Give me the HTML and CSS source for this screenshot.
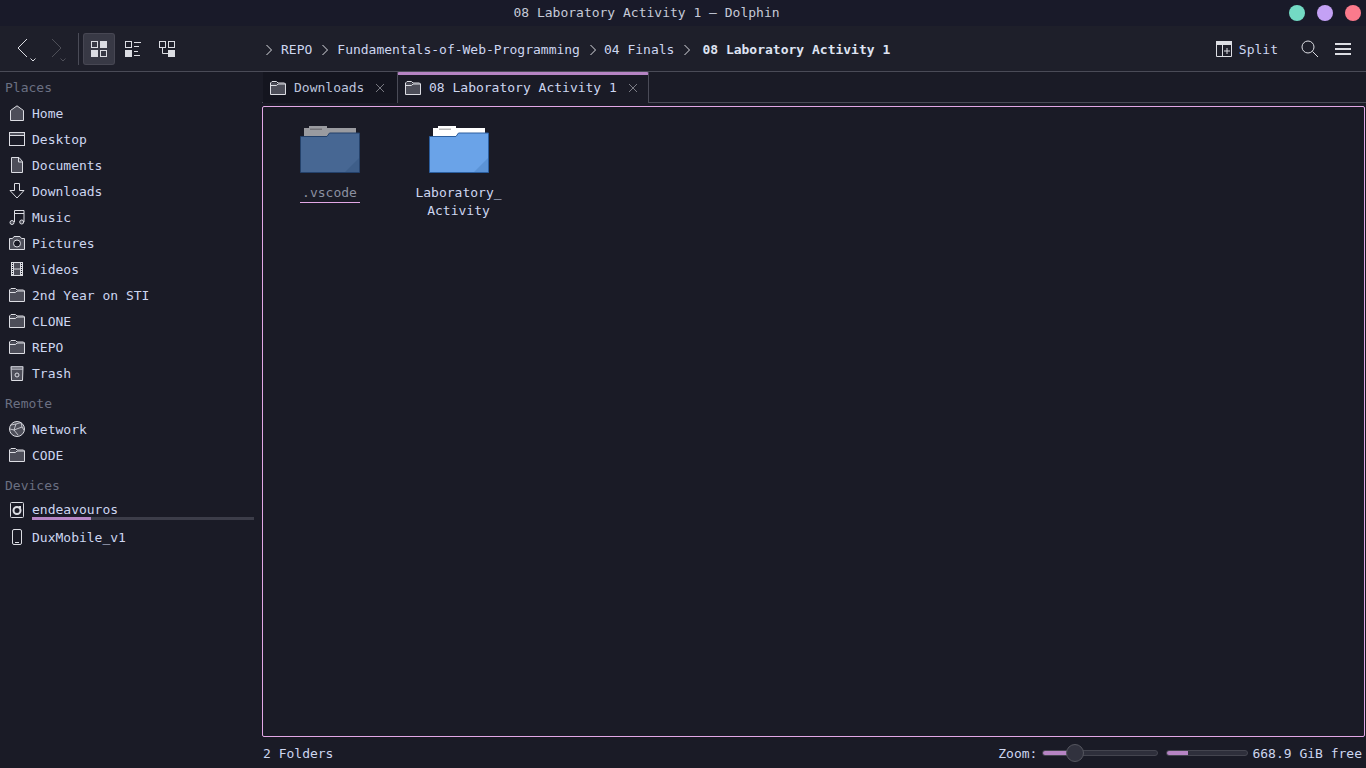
FILE: index.html
```html
<!DOCTYPE html>
<html lang="en">
<head>
  <meta charset="UTF-8" />
  <title>08 Laboratory Activity 1 — Dolphin</title>
  <link rel="stylesheet" href="styles.css">
</head>
<body>

<svg class="defs" width="0" height="0">
  <symbol id="i-folder" viewBox="0 0 16 16">
    <path d="M1 14V3.500L2 2.500H6.500L8 4H15V14Z" fill="#4d4e59" />
    <path d="M.5 14.500V3L2 1.500H6.500L8 3H14.500L15.500 4V14.500ZM.5 6.500L1 5.500H6.500L8 4H15.500" fill="none" stroke="#dcdde3" />
  </symbol>
  <symbol id="i-big" viewBox="0 0 60 47">
    <path d="M4 2H9V0H27V2H56V12H4Z" class="big-back" />
    <rect x="10" y="2.500" width="12" height="1.500" class="big-tab" />
    <path d="M.5 46.500V10.500H27L29.500 7H59.500V46.500Z" class="big-front" />
    <path d="M45 46L59 46V32Z" class="big-fold" />
  </symbol>
</svg>

<div class="window">
  <div class="titlebar">
    <div class="title">08 Laboratory Activity 1 — Dolphin</div>
    <div class="win-buttons">
      <span class="dot dot-green"></span>
      <span class="dot dot-purple"></span>
      <span class="dot dot-red"></span>
    </div>
  </div>

  <div class="toolbar">
    <div class="nav-btn">
      <svg width="16" height="24" viewBox="0 0 16 24"><path d="M12 2L3 11L12 20" class="line" /></svg>
      <svg class="caret" width="6" height="4" viewBox="0 0 6 4"><path d="M.5 .5L3 3L5.500 .5" class="line" /></svg>
    </div>
    <div class="nav-btn nav-off">
      <svg width="16" height="24" viewBox="0 0 16 24"><path d="M3 2L12 11L3 20" class="line" /></svg>
      <svg class="caret" width="6" height="4" viewBox="0 0 6 4"><path d="M.5 .5L3 3L5.500 .5" class="line" /></svg>
    </div>
    <div class="tool-sep"></div>
    <div class="view-btn view-active">
      <svg width="16" height="16" viewBox="0 0 16 16"><rect x=".5" y=".5" width="6" height="6" class="line" /><rect x="9" y="0" width="7" height="7" class="solid" /><rect x="0" y="9" width="7" height="7" class="solid" /><rect x="9.500" y="9.500" width="6" height="6" class="line" /></svg>
    </div>
    <div class="view-btn">
      <svg width="16" height="16" viewBox="0 0 16 16"><rect x=".5" y=".5" width="6" height="6" class="line" /><rect x="0" y="9" width="7" height="7" class="solid" /><path d="M9 1.500H16M9 5.500H14M9 10.500H13M9 14.500H15" class="line" /></svg>
    </div>
    <div class="view-btn">
      <svg width="16" height="16" viewBox="0 0 16 16"><rect x=".5" y=".5" width="6" height="6" class="line" /><rect x="9.500" y=".5" width="6" height="6" class="line" /><rect x="9" y="9" width="7" height="7" class="solid" /><path d="M3.500 7V12.500H9" class="line" /></svg>
    </div>

    <div class="crumbs">
      <svg class="crumb-arrow crumb-first" width="8" height="12" viewBox="0 0 8 12"><path d="M1.500 1L6.500 6L1.500 11" class="line" /></svg>
      <span>REPO</span>
      <svg class="crumb-arrow crumb-second" width="8" height="12" viewBox="0 0 8 12"><path d="M1.500 1L6.500 6L1.500 11" class="line" /></svg>
      <span>Fundamentals-of-Web-Programming</span>
      <svg class="crumb-arrow" width="8" height="12" viewBox="0 0 8 12"><path d="M1.500 1L6.500 6L1.500 11" class="line" /></svg>
      <span>04 Finals</span>
      <svg class="crumb-arrow crumb-last" width="8" height="12" viewBox="0 0 8 12"><path d="M1.500 1L6.500 6L1.500 11" class="line" /></svg>
      <strong>08 Laboratory Activity 1</strong>
    </div>

    <div class="tool-right">
      <div class="split">
        <svg width="16" height="16" viewBox="0 0 16 16"><path d="M.5 .5H15.500V15.500H.5ZM6.500 4V15.500" class="line" /><rect x="0" y="0" width="16" height="4" class="solid" /><path d="M11 7V13M8 10H14" class="line" /></svg>
        <span>Split</span>
      </div>
      <svg class="search" width="18" height="18" viewBox="0 0 18 18"><circle cx="7" cy="7" r="6" class="line" /><path d="M11.500 11.500L17 17" class="line" /></svg>
      <svg class="menu" width="16" height="14" viewBox="0 0 16 14"><rect y="1" width="16" height="2" class="solid" /><rect y="6" width="16" height="2" class="solid" /><rect y="11" width="16" height="2" class="solid" /></svg>
    </div>
  </div>

  <div class="body">
    <aside class="sidebar">
      <div class="side-head">Places</div>
      <div class="side-item">
        <svg width="16" height="16" viewBox="0 0 16 16"><path d="M8 .8L14.500 5.500V15.500H1.500V5.500Z" fill="#4d4e59" stroke="#dcdde3" /></svg>
        Home
      </div>
      <div class="side-item">
        <svg width="16" height="16" viewBox="0 0 16 16"><rect x=".5" y="1.500" width="15" height="13" class="line" /><path d="M1 4.500H15" class="line" /><rect x="1" y="2" width="14" height="2" fill="#4d4e59" /></svg>
        Desktop
      </div>
      <div class="side-item">
        <svg width="16" height="16" viewBox="0 0 16 16"><path d="M2.500 .5H10L13.500 4.500V15.500H2.500Z" fill="#4d4e59" stroke="#dcdde3" /><path d="M9.500 .5V5H13.500" class="line" /></svg>
        Documents
      </div>
      <div class="side-item">
        <svg width="16" height="16" viewBox="0 0 16 16"><path d="M5.500 .5H10.500V7.500H15L8 15L1 7.500H5.500Z" class="line" /></svg>
        Downloads
      </div>
      <div class="side-item">
        <svg width="16" height="16" viewBox="0 0 16 16"><path d="M5.500 13V1.500H15V13M5.500 4.500H15" class="line" /><circle cx="3" cy="13.500" r="2" fill="#4d4e59" stroke="#dcdde3" /><circle cx="12.700" cy="13" r="2" fill="#4d4e59" stroke="#dcdde3" /></svg>
        Music
      </div>
      <div class="side-item">
        <svg width="16" height="16" viewBox="0 0 16 16"><path d="M.5 3.500H3.500L5 1.500H11L12.500 3.500H15.500V14.500H.5Z" fill="#4d4e59" stroke="#dcdde3" /><circle cx="8" cy="8.500" r="3.500" fill="#1a1b26" stroke="#dcdde3" /></svg>
        Pictures
      </div>
      <div class="side-item">
        <svg width="16" height="16" viewBox="0 0 16 16"><rect x="2" y="1" width="12" height="14" fill="#dcdde3" /><rect x="5" y="2" width="6" height="5.500" fill="#4d4e59" /><rect x="5" y="8.500" width="6" height="5.500" fill="#4d4e59" /><path d="M3.500 2V14M12.500 2V14" stroke="#1a1b26" stroke-width="1" stroke-dasharray="1 1" fill="none" /></svg>
        Videos
      </div>
      <div class="side-item"><svg width="16" height="16"><use href="#i-folder" /></svg>2nd Year on STI</div>
      <div class="side-item"><svg width="16" height="16"><use href="#i-folder" /></svg>CLONE</div>
      <div class="side-item"><svg width="16" height="16"><use href="#i-folder" /></svg>REPO</div>
      <div class="side-item">
        <svg width="16" height="16" viewBox="0 0 16 16"><path d="M2 1.500H14L13.500 15.500H2.500Z" fill="#4d4e59" stroke="#dcdde3" /><rect x="2" y="1" width="12" height="4" fill="#b8b9c2" /><path d="M4 2V4.500M6 2V4.500M8 2V4.500M10 2V4.500M12 2V4.500" stroke="#4d4e59" fill="none" /><circle cx="8" cy="10" r="2" class="line" /></svg>
        Trash
      </div>

      <div class="side-head side-gap">Remote</div>
      <div class="side-item">
        <svg width="16" height="16" viewBox="0 0 16 16"><circle cx="8" cy="8" r="7.500" fill="#4d4e59" stroke="#dcdde3" /><path d="M2 4L7 3L12 1.500M7 3L5 9L1 8M5 9L9 14M5 9L13 6L15 9M13 6L12 1.500" fill="none" stroke="#dcdde3" stroke-width=".8" /></svg>
        Network
      </div>
      <div class="side-item"><svg width="16" height="16"><use href="#i-folder" /></svg>CODE</div>

      <div class="side-head side-gap">Devices</div>
      <div class="side-item side-device">
        <svg width="16" height="16" viewBox="0 0 16 16"><rect x="1.500" y=".5" width="13" height="15" rx="1" class="line" /><circle cx="8" cy="8.500" r="3.500" fill="none" stroke="#dcdde3" stroke-width="2" /><rect x="10" y="4" width="2" height="2" class="solid" /></svg>
        <div class="device-name">
          endeavouros
          <div class="device-bar"><div class="device-fill"></div></div>
        </div>
      </div>
      <div class="side-item">
        <svg width="16" height="16" viewBox="0 0 16 16"><rect x="3.500" y=".5" width="9" height="15" rx="1.500" class="line" /><path d="M6 13.500H10" class="line" /></svg>
        DuxMobile_v1
      </div>
    </aside>

    <main class="main">
      <div class="tabs">
        <div class="tab">
          <svg width="16" height="16"><use href="#i-folder" /></svg>
          <span>Downloads</span>
          <svg class="tab-x" width="10" height="10" viewBox="0 0 10 10"><path d="M1 1L9 9M9 1L1 9" class="line" /></svg>
        </div>
        <div class="tab tab-active">
          <svg width="16" height="16"><use href="#i-folder" /></svg>
          <span>08 Laboratory Activity 1</span>
          <svg class="tab-x" width="10" height="10" viewBox="0 0 10 10"><path d="M1 1L9 9M9 1L1 9" class="line" /></svg>
        </div>
      </div>

      <div class="view">
        <div class="file file-hidden">
          <svg width="60" height="47"><use href="#i-big" /></svg>
          <div class="file-name">.vscode</div>
        </div>
        <div class="file">
          <svg width="60" height="47"><use href="#i-big" /></svg>
          <div class="file-name">Laboratory_<br>Activity</div>
        </div>
      </div>

      <div class="status">
        <span class="status-count">2 Folders</span>
        <span>Zoom:</span>
        <div class="slider">
          <div class="slider-fill"></div>
          <div class="slider-knob"></div>
        </div>
        <div class="capacity"><div class="capacity-fill"></div></div>
        <span>668.9 GiB free</span>
      </div>
    </main>
  </div>
</div>

</body>
</html>
```

FILE: styles.css
```css
* { box-sizing: border-box; }

html, body { margin: 0; height: 100%; overflow: hidden; }

body {
  font-family: "DejaVu Sans Mono", "Liberation Mono", monospace;
  font-size: 13px;
  color: #cdd6f0;
  background: #1a1b26;
}

.defs { position: absolute; }

.window { display: flex; flex-direction: column; width: 1366px; height: 768px; }

svg { display: block; flex: none; }
.line { fill: none; stroke: #dcdde3; stroke-width: 1; }
.solid { fill: #dcdde3; }

/* title bar */
.titlebar { display: flex; align-items: center; height: 26px; background: #191a29; }
.title { flex: 1; padding: 0 0 2px 4px; text-align: center; color: #c6cad8; }
.win-buttons { display: flex; gap: 12px; width: 77px; }
.dot { width: 16px; height: 16px; border-radius: 50%; }
.dot-green { background: #73dac4; }
.dot-purple { background: #c4a1f5; }
.dot-red { background: #fb7a8c; }

/* tool bar */
.toolbar {
  display: flex; align-items: center;
  height: 46px; padding-left: 15px;
  background: #1e1f2a;
  border-bottom: 1px solid #4a4b57;
}
.nav-btn { position: relative; width: 34px; height: 24px; }
.nav-off { opacity: .25; width: 29px; }
.caret { position: absolute; left: 15px; top: 21px; }
.nav-off .caret { left: 11px; }
.tool-sep { width: 1px; height: 32px; margin-right: 4px; background: #4a4b57; }
.view-btn {
  display: flex; align-items: center; justify-content: center;
  width: 32px; height: 32px; margin-right: 2px;
  border: 1px solid transparent; border-radius: 3px;
}
.view-active { background: #383945; border-color: #55566280; }

.crumbs {
  display: flex; align-items: center;
  margin-left: 80px; padding-top: 2px;
  color: #cdd6f0;
}
.crumb-arrow { margin-right: 7px; }
.crumb-first { margin-right: 8px; }
.crumb-second { margin-right: 8px; }
.crumb-last { margin-right: 11px; }
.crumbs span, .crumbs strong { margin-right: 9px; }
.crumbs strong { color: #dfe3f2; }

.tool-right { display: flex; align-items: center; margin-left: auto; padding-right: 15px; }
.split { display: flex; align-items: center; gap: 7px; margin-right: 23px; }
.split span { padding-top: 2px; }
.search { margin-right: 16px; }

/* side panel */
.body { display: flex; flex: 1; min-height: 0; }
.sidebar { width: 262px; flex: none; padding-top: 2px; }
.side-head { height: 26px; padding: 1px 0 0 5px; line-height: 26px; color: #6b7082; }
.side-gap { margin-top: 4px; }
.side-item { display: flex; align-items: center; gap: 7px; height: 26px; padding-left: 9px; }
.side-device { align-items: flex-start; padding-top: 4px; }
.device-name { flex: 1; line-height: 15px; padding-right: 8px; }
.device-bar { height: 3px; background: #3c3d49; }
.device-fill { width: 59px; height: 3px; background: #b685c4; }

/* tabs and view */
.main { display: flex; flex-direction: column; flex: 1; min-width: 0; }
.tabs { display: flex; height: 31px; padding-left: 1px; border-bottom: 1px solid #4a4b57; }
.tab {
  display: flex; align-items: center;
  height: 31px; padding-left: 7px;
  background: #14151f;
  color: #bcc4dc;
}
.tab span { margin-left: 8px; }
.tab-x { margin-left: 11px; opacity: .5; }
.tab:first-child { width: 134px; }
.tab-active {
  width: 252px;
  padding-bottom: 3px;
  background: #1a1b26;
  border: 1px solid #4a4b57;
  border-top: 3px solid #b685c4;
  border-bottom: none;
  border-radius: 2px 2px 0 0;
  color: #cdd6f0;
}

.view {
  flex: 1;
  display: flex; align-items: flex-start;
  margin: 3px 1px 0 0;
  padding: 19px 0 0 2px;
  border: 1px solid #e3a8e6;
  border-radius: 2px;
}
.file { display: flex; flex-direction: column; align-items: center; width: 129px; }
.file-name { margin-top: 11px; line-height: 18px; text-align: center; color: #cdd6f0; }
.big-back { fill: #fff; }
.big-tab { fill: #b9b9b9; }
.big-front { fill: #6aa3e8; stroke: #2c5f9f; }
.big-fold { fill: #5b93d6; }
.file-hidden svg { opacity: .56; }
.file-hidden .file-name { width: 60px; height: 19px; color: #8b90a0; border-bottom: 1px solid #e3a8e6; }

/* status bar */
.status { display: flex; align-items: center; height: 31px; padding: 1px 4px 0 1px; color: #cdd6f0; }
.status-count { margin-right: auto; }
.slider { position: relative; width: 116px; height: 6px; margin: 0 8px 0 5px; background: #2e2f3b; border: 1px solid #44454f; border-radius: 3px; }
.slider-fill { width: 32px; height: 4px; background: #b685c4; border-radius: 2px 0 0 2px; }
.slider-knob {
  position: absolute; left: 23px; top: -7px;
  width: 18px; height: 18px;
  background: #31323e; border: 1px solid #55565f; border-radius: 50%;
}
.capacity { width: 82px; height: 6px; margin-right: 4px; background: #2e2f3b; border: 1px solid #44454f; border-radius: 3px; }
.capacity-fill { width: 21px; height: 4px; background: #b685c4; border-radius: 2px 0 0 2px; }
```
